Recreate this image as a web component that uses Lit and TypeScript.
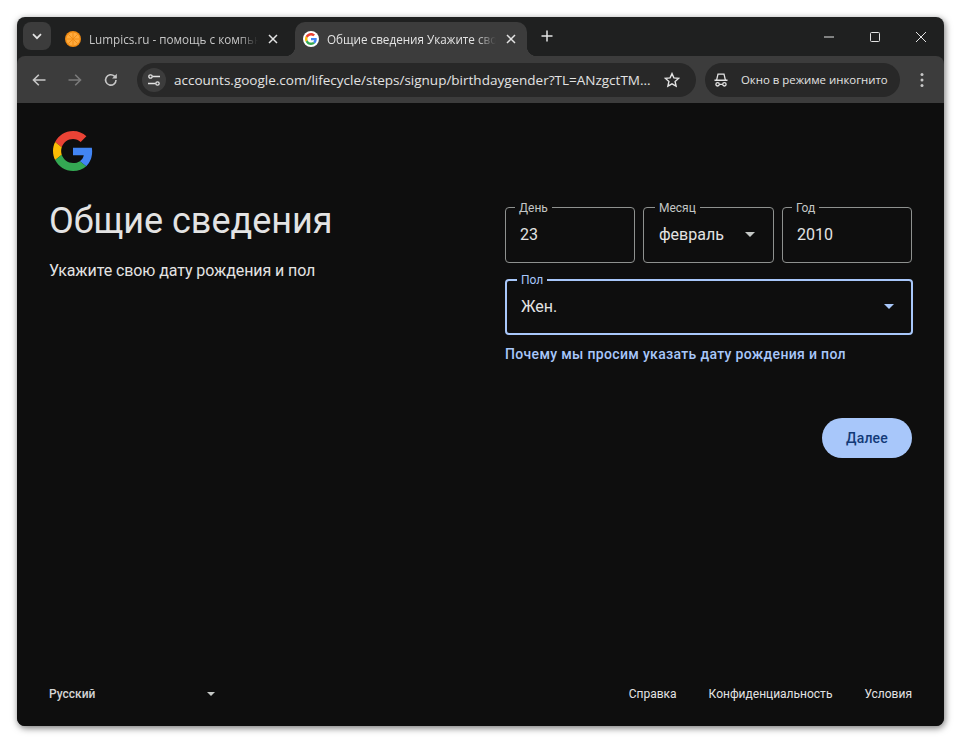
import { LitElement, html, css, svg } from 'lit';
import { customElement } from 'lit/decorators.js';

const googleG = (size: number) => html`
  <svg width=${size} height=${size} viewBox="0 0 48 48">
    <path fill="#EA4335" d="M24 9.5c3.54 0 6.71 1.22 9.21 3.6l6.85-6.85C35.9 2.38 30.47 0 24 0 14.62 0 6.51 5.38 2.56 13.22l7.98 6.19C12.43 13.72 17.74 9.5 24 9.5z"/>
    <path fill="#4285F4" d="M46.98 24.55c0-1.57-.15-3.09-.38-4.55H24v9.02h12.94c-.58 2.96-2.26 5.48-4.78 7.18l7.73 6c4.51-4.18 7.09-10.36 7.09-17.65z"/>
    <path fill="#FBBC05" d="M10.53 28.59c-.48-1.45-.76-2.99-.76-4.59s.27-3.14.76-4.59l-7.98-6.19C.92 16.46 0 20.12 0 24c0 3.88.92 7.54 2.56 10.78l7.97-6.19z"/>
    <path fill="#34A853" d="M24 48c6.48 0 11.93-2.13 15.89-5.81l-7.73-6c-2.15 1.45-4.92 2.3-8.16 2.3-6.26 0-11.57-4.22-13.47-9.91l-7.98 6.19C6.51 42.62 14.62 48 24 48z"/>
  </svg>
`;

const closeIcon = html`
  <svg width="10" height="10" viewBox="0 0 10 10">
    <path d="M1 1l8 8M9 1l-8 8" stroke="#e3e3e3" stroke-width="1.5" fill="none"/>
  </svg>
`;

const caret = svg`<path d="M0 0h10L5 5z"/>`;

@customElement('app-root')
export class AppRoot extends LitElement {
  static styles = css`
    :host {
      display: block;
      height: 743px;
      box-sizing: border-box;
      padding: 17px;
      background: #fff;
      font-family: 'Roboto', 'Liberation Sans', sans-serif;
    }
    .window {
      width: 927px;
      height: 709px;
      display: flex;
      flex-direction: column;
      border-radius: 8px;
      overflow: hidden;
      background: #1f2020;
      box-shadow: 1px 2px 7px rgba(0, 0, 0, 0.55);
    }

    /* tab strip */
    .tabstrip {
      height: 39px;
      flex: none;
      display: flex;
      align-items: flex-end;
      padding-left: 6px;
      font-family: 'Open Sans', 'Noto Sans', sans-serif;
      font-size: 11.7px;
      color: #e3e3e3;
    }
    .tab-search {
      width: 28px;
      height: 28px;
      margin-bottom: 6px;
      border-radius: 8px;
      background: #3c3c3c;
      display: flex;
      align-items: center;
      justify-content: center;
    }
    .tab {
      position: relative;
      height: 34px;
      display: flex;
      align-items: center;
      box-sizing: border-box;
      padding-left: 8px;
      border-radius: 10px 10px 0 0;
    }
    .tab.first {
      width: 238px;
      margin-left: 6px;
      padding-right: 6px;
      color: #c7c7c7;
    }
    .tab.active {
      width: 232px;
      background: #3c3c3c;
    }
    .tab.active::before,
    .tab.active::after {
      content: '';
      position: absolute;
      bottom: 0;
      width: 10px;
      height: 10px;
    }
    .tab.active::before {
      left: -10px;
      background: radial-gradient(circle at 0 0, transparent 10px, #3c3c3c 10.5px);
    }
    .tab.active::after {
      right: -10px;
      background: radial-gradient(circle at 100% 0, transparent 10px, #3c3c3c 10.5px);
    }
    .favicon {
      width: 16px;
      height: 16px;
      flex: none;
    }
    .favicon.google {
      border-radius: 50%;
      background: #fff;
      display: flex;
      align-items: center;
      justify-content: center;
    }
    .tab-title {
      flex: 1;
      min-width: 0;
      margin-left: 8px;
      white-space: nowrap;
      overflow: hidden;
      -webkit-mask-image: linear-gradient(to right, #000 88%, transparent 100%);
      mask-image: linear-gradient(to right, #000 88%, transparent 100%);
    }
    .tab-close {
      width: 30px;
      flex: none;
      display: flex;
      align-items: center;
      justify-content: center;
      margin-right: 1px;
    }
    .new-tab {
      width: 16px;
      height: 16px;
      margin: 0 0 12px 12px;
    }
    .win-controls {
      margin-left: auto;
      align-self: stretch;
      display: flex;
      align-items: center;
    }
    .win-btn {
      width: 46px;
      height: 39px;
      display: flex;
      align-items: center;
      justify-content: center;
    }

    /* toolbar */
    .toolbar {
      height: 47px;
      flex: none;
      display: flex;
      align-items: center;
      box-sizing: border-box;
      padding-left: 4px;
      background: #3c3c3c;
      border-radius: 8px 8px 0 0;
      font-family: 'Open Sans', 'Noto Sans', sans-serif;
    }
    .nav-btn {
      width: 36px;
      height: 34px;
      flex: none;
      display: flex;
      align-items: center;
      justify-content: center;
    }
    .omnibox {
      width: 559px;
      height: 34px;
      flex: none;
      margin-left: 8px;
      display: flex;
      align-items: center;
      box-sizing: border-box;
      padding: 0 16px 0 5px;
      border-radius: 17px;
      background: #282828;
    }
    .tune {
      width: 24px;
      height: 24px;
      flex: none;
      border-radius: 50%;
      background: #3c3c3c;
      display: flex;
      align-items: center;
      justify-content: center;
    }
    .url {
      flex: 1;
      min-width: 0;
      margin-left: 8px;
      font-size: 13.5px;
      color: #e3e3e3;
      white-space: nowrap;
    }
    .star {
      flex: none;
      display: flex;
    }
    .incognito {
      width: 195px;
      height: 34px;
      flex: none;
      margin-left: 9px;
      display: flex;
      align-items: center;
      box-sizing: border-box;
      padding-left: 8px;
      border-radius: 17px;
      background: #282828;
      font-size: 11.4px;
      color: #e3e3e3;
      white-space: nowrap;
    }
    .incognito svg {
      margin-right: 12px;
    }
    .kebab {
      margin-left: 5px;
      width: 34px;
      display: flex;
      justify-content: center;
    }

    /* page */
    .page {
      flex: 1;
      min-height: 0;
      display: flex;
      flex-direction: column;
      box-sizing: border-box;
      padding: 28px 32px 0;
      background: #0e0e0e;
      color: #e3e3e3;
    }
    .logo {
      height: 40px;
      padding-left: 4px;
    }
    .main {
      flex: 1;
      display: flex;
      justify-content: space-between;
    }
    h1 {
      margin: 28px 0 0;
      font-size: 36px;
      line-height: 44px;
      font-weight: 400;
      font-family: 'Roboto', sans-serif;
    }
    .sub {
      margin: 16px 0 0;
      font-size: 16px;
      line-height: 24px;
      letter-spacing: -0.09px;
    }
    .form {
      width: 407px;
      padding-top: 36px;
    }
    .date-row {
      display: grid;
      grid-template-columns: 130px 131px 130px;
      gap: 8px;
    }
    .field {
      position: relative;
      height: 56px;
      box-sizing: border-box;
      display: flex;
      align-items: center;
      justify-content: space-between;
      padding: 0 14px 2px;
      border: 1px solid #8e918f;
      border-radius: 4px;
      font-size: 16px;
    }
    .field.select {
      padding-left: 15px;
    }
    .field.focus {
      height: 56px;
      margin-top: 16px;
      border: 2px solid #a8c7fa;
      padding: 0 13px 2px 14px;
      width: 408px;
    }
    .field svg {
      fill: #c4c7c5;
      margin-right: 4px;
    }
    .field.focus svg {
      fill: #a8c7fa;
    }
    .label {
      position: absolute;
      left: 9px;
      top: -6px;
      padding: 0 4px;
      background: #0e0e0e;
      font-size: 12px;
      line-height: 13px;
      color: #c4c7c5;
    }
    .field.select .label {
      left: 11px;
    }
    .field.focus .label {
      left: 10px;
      top: -7px;
      color: #a8c7fa;
    }
    .why {
      display: block;
      margin-top: 9px;
      font-size: 14px;
      line-height: 20px;
      font-weight: 500;
      color: #a8c7fa;
      letter-spacing: 0.33px;
    }
    .actions {
      display: flex;
      justify-content: flex-end;
      margin-top: 54px;
    }
    .next {
      width: 90px;
      height: 40px;
      border-radius: 20px;
      background: #a8c7fa;
      color: #123a78;
      display: flex;
      align-items: center;
      justify-content: center;
      font-size: 14px;
      font-weight: 500;
      letter-spacing: 0.2px;
    }
    .footer {
      height: 42px;
      flex: none;
      display: flex;
      justify-content: space-between;
      box-sizing: border-box;
      padding-top: 2px;
      font-size: 12px;
      line-height: 16px;
    }
    .lang {
      width: 166px;
      display: flex;
      align-items: center;
      justify-content: space-between;
      height: 16px;
      font-weight: 500;
      color: #d4d4d4;
    }
    .lang svg {
      fill: #c4c7c5;
    }
    .links {
      display: flex;
      gap: 32px;
    }
  `;

  private field(label: string, value: string, select = false, focus = false) {
    return html`
      <div class="field ${select ? 'select' : ''} ${focus ? 'focus' : ''}">
        <span class="label">${label}</span>
        <span>${value}</span>
        ${select ? html`<svg width="10" height="5" viewBox="0 0 10 5">${caret}</svg>` : ''}
      </div>
    `;
  }

  render() {
    return html`
      <div class="window">
        <div class="tabstrip">
          <div class="tab-search">
            <svg width="10" height="7" viewBox="0 0 10 7"><path d="M1 1.2l4 4 4-4" stroke="#e3e3e3" stroke-width="1.7" fill="none"/></svg>
          </div>
          <div class="tab first">
            <svg class="favicon" viewBox="0 0 16 16">
              <circle cx="8" cy="8" r="8" fill="#f08a12"/>
              <circle cx="8" cy="8" r="6.6" fill="#ffab3d"/>
              <path d="M8 1.500v13M1.500 8h13M3.400 3.400l9.200 9.200M12.600 3.400l-9.200 9.200" stroke="#f08a12" stroke-width="0.9"/>
            </svg>
            <span class="tab-title">Lumpics.ru - помощь с компьютером</span>
            <span class="tab-close">${closeIcon}</span>
          </div>
          <div class="tab active">
            <span class="favicon google">${googleG(12)}</span>
            <span class="tab-title">Общие сведения Укажите свою дату</span>
            <span class="tab-close">${closeIcon}</span>
          </div>
          <svg class="new-tab" viewBox="0 0 16 16"><path d="M8 2.500v11M2.500 8h11" stroke="#e3e3e3" stroke-width="1.5"/></svg>
          <div class="win-controls">
            <div class="win-btn"><svg width="12" height="12" viewBox="0 0 12 12"><path d="M1 6h10" stroke="#e3e3e3"/></svg></div>
            <div class="win-btn"><svg width="12" height="12" viewBox="0 0 12 12"><rect x="1.500" y="1.500" width="9" height="9" rx="1" stroke="#e3e3e3" fill="none"/></svg></div>
            <div class="win-btn"><svg width="12" height="12" viewBox="0 0 12 12"><path d="M1 1l10 10M11 1L1 11" stroke="#e3e3e3"/></svg></div>
          </div>
        </div>

        <div class="toolbar">
          <div class="nav-btn">
            <svg width="16" height="16" viewBox="0 0 16 16"><path d="M14.500 8H2.500M7.800 2.800L2.500 8l5.300 5.200" stroke="#c7c7c7" stroke-width="1.6" fill="none"/></svg>
          </div>
          <div class="nav-btn">
            <svg width="16" height="16" viewBox="0 0 16 16"><path d="M1.500 8h12M8.200 2.800L13.500 8l-5.300 5.200" stroke="#7b7b7b" stroke-width="1.6" fill="none"/></svg>
          </div>
          <div class="nav-btn">
            <svg width="16" height="16" viewBox="0 0 16 16"><path d="M13 8a5.200 5.200 0 1 1-1.600-3.800L13 5.800" stroke="#c7c7c7" stroke-width="1.6" fill="none"/><path d="M13.800 1.800v4.700H9.100z" fill="#c7c7c7"/></svg>
          </div>
          <div class="omnibox">
            <span class="tune">
              <svg width="14" height="14" viewBox="0 0 14 14" fill="none" stroke="#e3e3e3" stroke-width="1.3">
                <circle cx="3.500" cy="3.500" r="1.700"/><path d="M5.500 3.500H13M1 10.500h7.500"/><circle cx="10.500" cy="10.500" r="1.700"/>
              </svg>
            </span>
            <span class="url">accounts.google.com/lifecycle/steps/signup/birthdaygender?TL=ANzgctTM...</span>
            <span class="star">
              <svg width="16" height="16" viewBox="0 0 16 16"><path d="M8 1.600l1.900 4.300 4.700.5-3.500 3.100 1 4.600L8 11.800l-4.100 2.300 1-4.600-3.500-3.100 4.700-.5z" stroke="#e3e3e3" stroke-width="1.4" fill="none"/></svg>
            </span>
          </div>
          <div class="incognito">
            <svg width="16" height="16" viewBox="0 0 16 16" fill="none" stroke="#e3e3e3" stroke-width="1.300">
              <path d="M3.600 8.200L5 2.200h6l1.400 6"/>
              <path d="M1.500 8.300h13" stroke-width="1.500"/>
              <circle cx="4.600" cy="12.300" r="1.700"/>
              <circle cx="11.400" cy="12.300" r="1.700"/>
              <path d="M6.300 12.300h3.400"/>
            </svg>
            Окно в режиме инкогнито
          </div>
          <div class="kebab">
            <svg width="4" height="16" viewBox="0 0 4 16" fill="#c7c7c7"><circle cx="2" cy="2.500" r="1.500"/><circle cx="2" cy="8" r="1.500"/><circle cx="2" cy="13.500" r="1.500"/></svg>
          </div>
        </div>

        <div class="page">
          <div class="logo">${googleG(40)}</div>
          <div class="main">
            <div>
              <h1>Общие сведения</h1>
              <p class="sub">Укажите свою дату рождения и пол</p>
            </div>
            <div class="form">
              <div class="date-row">
                ${this.field('День', '23')}
                ${this.field('Месяц', 'февраль', true)}
                ${this.field('Год', '2010')}
              </div>
              ${this.field('Пол', 'Жен.', true, true)}
              <span class="why">Почему мы просим указать дату рождения и пол</span>
              <div class="actions"><div class="next">Далее</div></div>
            </div>
          </div>
          <div class="footer">
            <div class="lang">
              <span>Русский</span>
              <svg width="8" height="4" viewBox="0 0 10 5">${caret}</svg>
            </div>
            <div class="links">
              <span>Справка</span>
              <span>Конфиденциальность</span>
              <span>Условия</span>
            </div>
          </div>
        </div>
      </div>
    `;
  }
}
